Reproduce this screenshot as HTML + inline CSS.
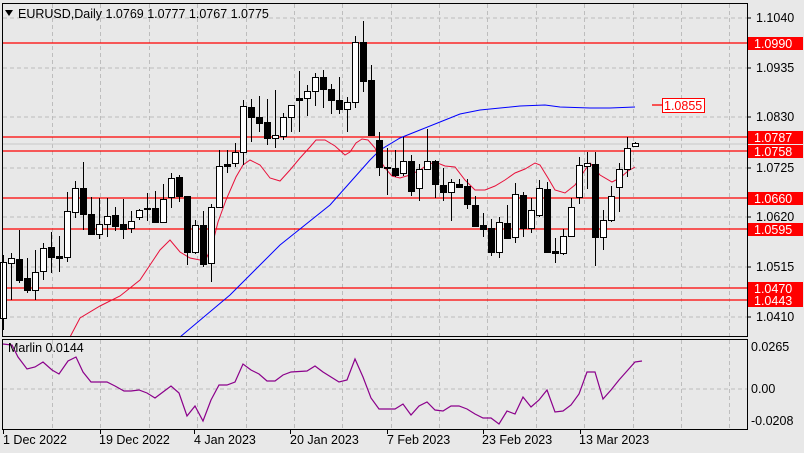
<!DOCTYPE html>
<html><head><meta charset="utf-8"><style>
html,body{margin:0;padding:0;background:#e8e8e8;}
svg{display:block;font-family:"Liberation Sans","DejaVu Sans",sans-serif;font-size:12.5px;}
</style></head><body>
<svg id="s" width="804" height="453" viewBox="0 0 804 453" xmlns="http://www.w3.org/2000/svg">
<rect width="804" height="453" fill="#e8e8e8"/>
<g id="grid" stroke="#bdbdbd" stroke-dasharray="4,3" stroke-width="1"></g>
<g stroke="#ff0000" stroke-width="1.3">
<line x1="2" y1="43" x2="747" y2="43"/>
<line x1="2" y1="137" x2="747" y2="137"/>
<line x1="2" y1="151" x2="747" y2="151"/>
<line x1="2" y1="198" x2="747" y2="198"/>
<line x1="2" y1="229" x2="747" y2="229"/>
<line x1="2" y1="288" x2="747" y2="288"/>
<line x1="2" y1="300" x2="747" y2="300"/>
<line x1="652" y1="105" x2="662" y2="105"/>
</g>
<line x1="2" y1="144" x2="747" y2="144" stroke="#c8c8c8"/>
<polyline fill="none" stroke="#e8103a" stroke-width="1" points="70,337 80,318 100,306 120,296 140,280 150,265 160,250 170,240 180,252 190,258 200,260 206,259 212,246 218,222 226,200 236,177 243,165 250,160 260,165 270,178 280,181 290,170 300,158 310,147 316,140 325,140 335,146 345,155 350,152 356,143 362,139 368,140 375,148 380,160 385,168 392,176 400,178 410,175 420,170 427,165 435,162 445,166 455,167 465,180 475,190 485,190 495,186 505,180 515,173 525,169 535,163 540,165 548,178 555,190 565,193 575,185 585,170 590,163 600,175 612,182 620,178 628,171 635,167"/>
<polyline fill="none" stroke="#0000ff" stroke-width="1" points="180,337 230,295 280,245 330,205 370,160 380,150 400,138 420,130 440,122 460,114 480,110 520,106 545,105 560,107 590,108 610,108 635,107"/>
<g id="c"></g>
<polyline fill="none" stroke="#8b008b" stroke-width="1.2" points="3,344 12,345 18,357 27,369 35,367 43,362 52,370 59,374 68,361 76,357 83,372 91,382 107,382 115,386 124,391 131,391 139,390 147,393 155,398 163,392 171,386 179,393 187,416 195,406 203,421 211,400 219,385 227,385 235,382 243,364 251,370 259,374 267,381 275,381 283,375 291,372 307,371 315,366 323,372 331,377 339,382 347,380 355,359 363,377 371,398 379,409 387,409 395,409 403,404 411,415 419,406 427,402 435,410 443,411 451,406 459,406 467,409 475,414 483,418 491,418 499,424 507,411 515,414 523,397 531,407 539,400 547,390 555,412 563,411 571,405 579,394 587,372 595,372 603,399 611,390 619,380 627,371 635,362 642,361"/>
<g fill="none" stroke="#000" stroke-width="1">
<rect x="2.5" y="3.5" width="745" height="333"/>
<rect x="2.5" y="339.5" width="745" height="90"/>
</g>
<g id="ticks" stroke="#000"></g>
<g fill="#000">
<path d="M5,10 L13,10 L9,16 Z"/>
<text x="18" y="18">EURUSD,Daily  1.0769 1.0777 1.0767 1.0775</text>
<text x="8" y="352">Marlin 0.0144</text>
<text x="756" y="22">1.1040</text>
<text x="756" y="72">1.0935</text>
<text x="756" y="121">1.0830</text>
<text x="756" y="172">1.0725</text>
<text x="756" y="221">1.0620</text>
<text x="756" y="271">1.0515</text>
<text x="756" y="321">1.0410</text>
<text x="751" y="351">0.0265</text>
<text x="751" y="393">0.00</text>
<text x="751" y="425">-0.0208</text>
<text x="3" y="444">1 Dec 2022</text>
<text x="99" y="444">19 Dec 2022</text>
<text x="194" y="444">4 Jan 2023</text>
<text x="290" y="444">20 Jan 2023</text>
<text x="387" y="444">7 Feb 2023</text>
<text x="482" y="444">23 Feb 2023</text>
<text x="579" y="444">13 Mar 2023</text>
</g>
<g id="lbl"></g>
<rect x="662.5" y="98.5" width="42" height="14" fill="#fff" stroke="#ff0000"/>
<text x="664" y="110" fill="#ff0000">1.0855</text>
</svg>
<script>
var NS="http://www.w3.org/2000/svg";
function el(p,t,a){var e=document.createElementNS(NS,t);for(var k in a)e.setAttribute(k,a[k]);document.getElementById(p).appendChild(e);return e;}
var gy=[18,68,117,168,217,267,317];
gy.forEach(function(y){el("grid","line",{x1:3,y1:y,x2:747,y2:y});el("ticks","line",{x1:747,y1:y,x2:751,y2:y});});
el("grid","line",{x1:3,y1:389,x2:747,y2:389});
for(var x=3.5+48.4;x<747;x+=48.4){el("grid","line",{x1:Math.round(x)+.5,y1:4,x2:Math.round(x)+.5,y2:336});el("grid","line",{x1:Math.round(x)+.5,y1:340,x2:Math.round(x)+.5,y2:429});}
[3,100,194,290,387,483,580].forEach(function(x){el("ticks","line",{x1:x+.5,y1:430,x2:x+.5,y2:434});});
var d="3W262,318,255,330 11W258,263,253,300 19B259,280,230,283 27B278,290,258,293 35W272,290,250,300 43W248,271,243,280 51B247,257,232,273 59B256,258,236,272 67W211,257,192,262 75W188,212,181,218 83B188,214,162,230 91B214,234,197,235 99W224,234,198,239 107W216,224,198,237 115B215,226,207,231 123B224,229,199,239 131W221,228,211,233 139W210,217,209,220 147B208,209,193,221 155B208,222,191,223 163W199,222,184,223 171W178,197,173,208 179B177,196,175,202 187B196,252,196,265 195W225,252,220,254 203B225,264,211,267 211W207,263,204,282 219W166,207,150,208 227B164,166,150,173 235W152,163,143,167 243W106,152,100,165 251B107,117,99,142 259B117,123,96,132 267B122,138,99,145 275W135,138,90,148 283W117,136,113,140 291W105,117,105,132 299B98,100,71,132 307W91,98,85,116 315W77,91,73,106 323B77,89,70,108 331B89,100,84,114 339B100,109,77,114 347W102,109,97,132 355W42,102,36,108 363B42,81,21,92 371B80,135,65,136 379B140,167,132,176 387B167,168,148,195 395B168,175,150,177 403W161,173,137,176 411B161,191,155,196 419W169,188,164,201 427W161,169,129,170 435B161,184,160,198 443B185,192,168,201 451W182,192,179,221 459B184,187,179,188 467B186,204,179,209 475B205,226,196,227 483B225,229,213,237 491B228,252,219,256 499W222,252,217,258 507B223,238,205,239 515W194,237,183,243 523B195,228,192,237 531W210,228,198,233 539W188,215,180,217 547B189,252,182,253 555B251,253,238,263 563W236,253,229,255 571W207,236,198,237 579W165,197,157,204 587W163,166,152,189 595B164,237,152,266 603W220,237,210,250 611W196,220,186,222 619W169,187,163,212 627W148,169,137,177 635W143,146,142,147";
d.split(" ").forEach(function(s){var m=s.match(/(\d+)([WB])(\d+),(\d+),(\d+),(\d+)/);var x=+m[1],t=+m[3],b=+m[4],h=+m[5],l=+m[6];
el("c","line",{x1:x+.5,y1:h,x2:x+.5,y2:l,stroke:"#000"});
var hgt=Math.max(b-t,1);
el("c","rect",{x:x-2.5,y:t+.5,width:6,height:hgt,fill:m[2]=="W"?"#fff":"#000",stroke:"#000"});});
[[43,"1.0990"],[137,"1.0787"],[151,"1.0758"],[198,"1.0660"],[229,"1.0595"],[288,"1.0470"],[300,"1.0443"]].forEach(function(a){
el("lbl","rect",{x:748,y:a[0]-6,width:55,height:13,fill:"#ff0000"});
var t=el("lbl","text",{x:754,y:a[0]+5,fill:"#fff"});t.textContent=a[1];});
</script>
</body></html>
